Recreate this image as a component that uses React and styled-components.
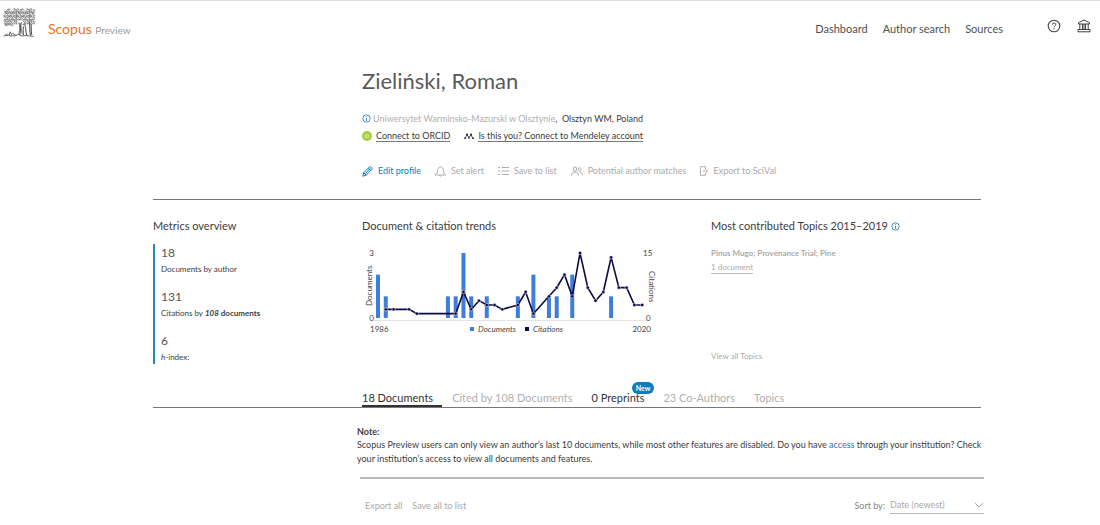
import React from 'react'
import styled, { createGlobalStyle } from 'styled-components'

const documents = {
  1986: 2,
  1987: 1,
  1995: 1,
  1996: 1,
  1997: 3,
  1998: 1,
  2000: 1,
  2004: 1,
  2006: 2,
  2008: 1,
  2009: 1,
  2011: 2,
  2016: 1,
}

const citations = {
  1987: 2,
  1988: 2,
  1990: 2,
  1991: 1,
  1996: 1,
  1997: 6,
  1998: 2,
  1999: 4,
  2000: 3,
  2001: 3,
  2002: 2,
  2004: 3,
  2005: 6,
  2006: 1,
  2008: 5,
  2009: 7,
  2010: 10,
  2011: 5,
  2012: 15,
  2013: 7,
  2014: 4,
  2015: 6,
  2016: 14,
  2017: 7,
  2018: 7,
  2019: 3,
  2020: 3,
}

const metrics = [
  { value: '18', label: 'Documents by author' },
  {
    value: '131',
    label: (
      <>
        Citations by{' '}
        <b>
          <i>108</i> documents
        </b>
      </>
    ),
  },
  {
    value: '6',
    label: (
      <>
        <i>h</i>-index:
      </>
    ),
  },
]

// crown of the tree: rows of small curls, shifted unevenly
const leaves = []
for (let row = 0; row < 9; row++) {
  for (let col = 0; col < 14; col++) {
    const n = (row * 7 + col * 5 + row * col) % 6
    if (row === 0 && (col < 1 || n === 3)) continue
    if (row > 5 && col > 5 && col < 9) continue
    if (row > 7 && col > 3) continue
    const x = 0.6 + col * 2.2 + (n % 3) * 0.4
    const y = 1.2 + row * 1.9 + (n % 2) * 0.7
    leaves.push(
      n < 3
        ? `M${x} ${y}q.8 -1.3 1.700 -.1t-.9 1`
        : `M${x} ${y + 0.8}q.2 -1.700 1.300 -1.100t.3 1.300`
    )
  }
}

const TreeLogo = () => (
  <svg width="33" height="30" viewBox="0 0 33 30" fill="none" stroke="#666">
    <path d={leaves.join('')} strokeWidth="0.8" />
    <path
      d="M15.500 14c1.500 3 1.800 7 .3 12M18.500 14c-1 4-.3 8 .7 12"
      strokeWidth="0.8"
    />
    <path
      d="M17 15c.6 4 .4 8-.2 12M20 17c1-2 2-1.500 2 .5 1.200 2 .4 6 1.600 9.500M20.500 18.500c-.8 3 0 6-.3 8.500M26 14c1.600 4 .2 8.500 1.400 13.500M28 16c.6 3-.2 7 .8 11"
      stroke="#444"
      strokeWidth="1"
    />
    <path
      d="M.5 28l5-.8 2 .8 4-.3 4-1.200 3 1.400 5-.4 7 .9M6 27.500l1.200-3.700 1.800 3.500M9.500 25l3.300 2.400M2.500 26.800l2-.7"
      stroke="#555"
      strokeWidth="0.9"
    />
  </svg>
)

const HelpIcon = () => (
  <svg width="14" height="14" viewBox="0 0 14 14" fill="none" stroke="#444">
    <circle cx="7" cy="7" r="5.800" strokeWidth="1.100" />
    <path d="M5.300 5.600c0-2.200 3.500-2.100 3.400 0 0 1.200-1.700 1.300-1.700 2.700M7 9.300v1.100" />
  </svg>
)

const InstitutionIcon = () => (
  <svg width="14" height="14" viewBox="0 0 14 14" fill="none" stroke="#444">
    <path d="M1.500 5V3.700L7 1l5.500 2.700V5zM2.800 5v5.500M5.500 5v5.500M7 5v5.500M8.500 5v5.500M11.200 5v5.500M1 12.800v-2.300h12v2.300z" />
  </svg>
)

const InfoIcon = () => (
  <svg width="9" height="9" viewBox="0 0 9 9" fill="none" stroke="#2b87bf">
    <circle cx="4.500" cy="4.500" r="3.700" strokeWidth="0.9" />
    <path d="M4.500 4v2.800M4.500 2.200v1" strokeWidth="0.9" />
  </svg>
)

const OrcidIcon = () => (
  <svg width="10" height="10" viewBox="0 0 10 10">
    <circle cx="5" cy="5" r="5" fill="#a6ce39" />
    <path
      d="M3.200 3.200v3.800M4.700 3.400v3.300h.9c2.200 0 2.200-3.300 0-3.300z"
      fill="none"
      stroke="#e3f1bd"
      strokeWidth="0.8"
    />
  </svg>
)

const MendeleyIcon = () => (
  <svg width="10" height="8" viewBox="0 0 10 8" fill="#333">
    <circle cx="3" cy="2.600" r="1.100" />
    <circle cx="7" cy="2.600" r="1.100" />
    <circle cx="1" cy="6.200" r="0.900" />
    <circle cx="5" cy="5.800" r="0.900" />
    <circle cx="9" cy="6.200" r="0.900" />
    <path
      d="M1.100 6.200C2.200 5.500 2 4 3 2.900L5 5.500l2-2.600c1 1.100.8 2.600 1.900 3.300"
      fill="none"
      stroke="#333"
      strokeWidth="0.9"
    />
  </svg>
)

const PencilIcon = () => (
  <svg width="11" height="11" viewBox="0 0 11 11" fill="none" stroke="#0c7dbb">
    <path d="M.8 10.200l.9-3.500L7.500.9c1-.8 3.200 1.200 2.400 2.400L4.200 9.200zM1.700 6.700l2.500 2.500M3 7.800l5.300-5.300M6.400 2l2.500 2.500" />
  </svg>
)

const BellIcon = () => (
  <svg width="11" height="11" viewBox="0 0 11 11" fill="none" stroke="#b0b0b0">
    <path d="M.3 9c1.800-1.200 2.200-2.300 2.200-4.300 0-2.400 1.200-3.700 3-3.700s3 1.300 3 3.700c0 2 .4 3.100 2.200 4.300zM4.400 9.200c.2 1.300 2 1.300 2.200 0" />
  </svg>
)

const ListIcon = () => (
  <svg width="11" height="10" viewBox="0 0 11 10" stroke="#b0b0b0">
    <path d="M0 1.500h2M0 5h2M0 8.500h2M3.500 1.500H11M3.500 5H11M3.500 8.500H11" />
  </svg>
)

const PeopleIcon = () => (
  <svg width="12" height="10" viewBox="0 0 12 10" fill="none" stroke="#aaa">
    <ellipse cx="4" cy="3" rx="1.700" ry="2.100" />
    <ellipse cx="8.700" cy="3.500" rx="1.400" ry="1.700" />
    <path d="M.6 9.500c0-2.500 1-3 2.600-3.600L4 6.700l.9-.8C6.500 6.500 7.400 7 7.400 9.500M8.700 6.400c1.600.2 2.700 1 2.700 3.100" />
  </svg>
)

const ExportIcon = () => (
  <svg width="8" height="10" viewBox="0 0 8 10" fill="none" stroke="#b0b0b0">
    <path d="M5.500 3V.7h-5v8.600h5V7M2.500 5h5M5.700 3.200L7.500 5 5.700 6.800" />
  </svg>
)

const TrendChart = () => {
  const x = year => 16 + (year - 1986) * 7.77
  const y = share => 74 - share * 65
  const points = Object.entries(citations).map(([year, n]) => [
    x(year),
    y(n / 15),
  ])
  return (
    <Chart viewBox="0 0 296 94" role="img" aria-label="Documents and citations">
      <path d="M10 76.500h276" stroke="#e4e4e4" />
      {Object.entries(documents).map(([year, n]) => (
        <rect
          key={year}
          x={x(year) - 2}
          y={y(n / 3)}
          width="4"
          height={(n * 65) / 3}
          fill="#3f7ddb"
        />
      ))}
      <polyline
        points={points.map(p => p.join()).join(' ')}
        fill="none"
        stroke="#0b0a45"
        strokeWidth="1.600"
      />
      {points.map(([px, py]) => (
        <circle
          key={px}
          cx={px}
          cy={py}
          r="1.700"
          fill="#0b0a45"
          stroke="#fff"
          strokeWidth="0.5"
        />
      ))}
      <text x="12" y="12" textAnchor="end">3</text>
      <text x="12" y="77" textAnchor="end">0</text>
      <text x="8" y="88">1986</text>
      <text x="281" y="12">15</text>
      <text x="284" y="77">0</text>
      <text x="289" y="88" textAnchor="end">2020</text>
      <text transform="translate(10 62) rotate(-90)">Documents</text>
      <text transform="translate(287 27) rotate(90)">Citations</text>
      <rect x="108" y="83" width="4" height="4" fill="#3f7ddb" />
      <text x="116" y="88" fontStyle="italic">Documents</text>
      <rect x="163" y="83" width="4" height="4" fill="#0b0a45" />
      <text x="171" y="88" fontStyle="italic">Citations</text>
    </Chart>
  )
}

const App = () => {
  return (
    <Page>
      <GlobalStyle />
      <Header>
        <TreeLogo />
        <Brand href="#">
          Scopus <span>Preview</span>
        </Brand>
        <Nav>
          <a href="#dashboard">Dashboard</a>
          <a href="#authors">Author search</a>
          <a href="#sources">Sources</a>
        </Nav>
        <HeaderIcons>
          <IconButton aria-label="Help">
            <HelpIcon />
          </IconButton>
          <IconButton aria-label="Institution">
            <InstitutionIcon />
          </IconButton>
        </HeaderIcons>
      </Header>

      <Main>
        <Profile>
          <Name>Zieliński, Roman</Name>
          <Line>
            <InfoIcon />
            <Affiliation>
              <span>Uniwersytet Warminsko-Mazurski w Olsztynie</span>,&nbsp;
              Olsztyn WM, Poland
            </Affiliation>
          </Line>
          <Line>
            <OrcidIcon />
            <Connect href="#orcid">Connect to ORCID</Connect>
            <MendeleyIcon />
            <Connect href="#mendeley">
              Is this you? Connect to Mendeley account
            </Connect>
          </Line>
          <Actions>
            <Action $active>
              <PencilIcon />
              Edit profile
            </Action>
            <Action>
              <BellIcon />
              Set alert
            </Action>
            <Action>
              <ListIcon />
              Save to list
            </Action>
            <Action>
              <PeopleIcon />
              Potential author matches
            </Action>
            <Action>
              <ExportIcon />
              Export to SciVal
            </Action>
          </Actions>
        </Profile>

        <Overview>
          <section>
            <Heading>Metrics overview</Heading>
            <Metrics>
              {metrics.map(({ value, label }) => (
                <li key={value}>
                  <Value>{value}</Value>
                  <Label>{label}</Label>
                </li>
              ))}
            </Metrics>
          </section>
          <section>
            <Heading>Document &amp; citation trends</Heading>
            <TrendChart />
          </section>
          <Topics>
            <Heading>
              Most contributed Topics 2015–2019 <InfoIcon />
            </Heading>
            <Topic>Pinus Mugo; Provenance Trial; Pine</Topic>
            <TopicLink href="#topic">1 document</TopicLink>
            <AllTopics href="#topics">View all Topics</AllTopics>
          </Topics>
        </Overview>

        <Tabs>
          <Tab $active>18 Documents</Tab>
          <Tab>Cited by 108 Documents</Tab>
          <Tab $dark>
            0 Preprints
            <Badge>New</Badge>
          </Tab>
          <Tab>23 Co-Authors</Tab>
          <Tab>Topics</Tab>
        </Tabs>
      </Main>

      <Results>
        <Note>
          <b>Note:</b>
          <p>
            Scopus Preview users can only view an author’s last 10 documents,
            while most other features are disabled. Do you have{' '}
            <a href="#access">access</a> through your institution? Check your
            institution’s access to view all documents and features.
          </p>
        </Note>
        <Toolbar>
          <Action>Export all</Action>
          <Action>Save all to list</Action>
          <Sort>
            <label htmlFor="sort">Sort by:</label>
            <SelectWrap>
              <select id="sort">
                <option>Date (newest)</option>
              </select>
              <svg width="10" height="6" viewBox="0 0 10 6" fill="none">
                <path d="M1 1l4 4 4-4" stroke="#aaa" />
              </svg>
            </SelectWrap>
          </Sort>
        </Toolbar>
      </Results>
    </Page>
  )
}

const GlobalStyle = createGlobalStyle`
  * {
    box-sizing: border-box;
  }
  body {
    margin: 0;
    background: #fff;
    color: #3c3c3c;
    font-family: Lato, 'Open Sans', sans-serif;
    font-size: 9px;
  }
  a {
    color: inherit;
    text-decoration: none;
  }
  button,
  select {
    font: inherit;
    color: inherit;
    background: none;
    border: none;
    padding: 0;
    cursor: pointer;
  }
  svg {
    flex-shrink: 0;
  }
`
const Page = styled.div`
  border-top: 1px solid #dcdcdc;
`
const Header = styled.header`
  display: flex;
  align-items: center;
  height: 54px;
  padding: 0 9px 0 3px;
  & > svg {
    margin-bottom: 10px;
  }
`
const Brand = styled.a`
  margin-left: 12px;
  font-size: 14px;
  color: #e9711c;
  & span {
    font-size: 10px;
    color: #999;
  }
`
const Nav = styled.nav`
  display: flex;
  gap: 15px;
  margin-left: auto;
  font-size: 11px;
  color: #505050;
`
const HeaderIcons = styled.div`
  display: flex;
  gap: 16px;
  margin: 0 0 4px 44px;
`
const IconButton = styled.button`
  display: flex;
`
const Main = styled.main`
  padding: 0 119px 0 153px;
`
const Profile = styled.section`
  padding: 12px 0 20px 209px;
  border-bottom: 1px solid #777;
`
const Name = styled.h1`
  margin: 0 0 15px;
  font-size: 22px;
  line-height: 28px;
  font-weight: normal;
  color: #5a5a5a;
`
const Line = styled.div`
  display: flex;
  align-items: center;
  min-height: 17px;
`
const Affiliation = styled.div`
  margin-left: 2px;
  & span {
    color: #b0b0b0;
  }
`
const Connect = styled.a`
  margin: 0 14px 0 4px;
  line-height: 11px;
  border-bottom: 1px solid #777;
`
const Actions = styled.div`
  display: flex;
  gap: 14px;
  margin-top: 19px;
`
const Action = styled.button`
  display: flex;
  align-items: center;
  gap: 5px;
  line-height: 16px;
  color: ${({ $active }) => ($active ? '#0c7dbb' : '#aaa')};
`
const Overview = styled.div`
  display: grid;
  grid-template-columns: 209px 349px 1fr;
  padding-top: 18px;
`
const Heading = styled.h2`
  margin: 0 0 10px;
  font-size: 11px;
  line-height: 16px;
  font-weight: normal;
  & svg {
    vertical-align: -1px;
  }
`
const Metrics = styled.ul`
  display: flex;
  flex-direction: column;
  gap: 12px;
  margin: 0;
  padding: 0 0 0 6px;
  list-style: none;
  border-left: 2px solid #2b87b0;
`
const Value = styled.div`
  font-size: 12px;
  line-height: 18px;
  color: #555;
`
const Label = styled.div`
  font-size: 8px;
  line-height: 14px;
`
const Chart = styled.svg`
  display: block;
  width: 296px;
  font-size: 8px;
  fill: #444;
`
const Topics = styled.section`
  display: flex;
  flex-direction: column;
  align-items: flex-start;
  padding-bottom: 2px;
  font-size: 8px;
  line-height: 12px;
  color: #aaa;
  & h2 {
    color: #3c3c3c;
  }
`
const Topic = styled.div`
  margin: 3px 0 2px;
  font-weight: bold;
`
const TopicLink = styled.a`
  border-bottom: 1px solid #bbb;
`
const AllTopics = styled.a`
  margin-top: auto;
`
const Tabs = styled.div`
  display: flex;
  gap: 10px;
  margin-top: 26px;
  padding-left: 209px;
  border-bottom: 1px solid #777;
`
const Tab = styled.button`
  position: relative;
  padding-right: 9px;
  font-size: 11px;
  line-height: 15px;
  color: ${({ $active, $dark }) => ($active || $dark ? '#333' : '#b0b0b0')};
  border-bottom: 2px solid ${({ $active }) => ($active ? '#333' : 'transparent')};
`
const Badge = styled.span`
  position: absolute;
  top: -8px;
  right: -1px;
  padding: 0 4px;
  font-size: 7px;
  line-height: 12px;
  font-weight: bold;
  color: #fff;
  background: #0c7dbb;
  border-radius: 6px;
`
const Results = styled.section`
  padding: 17px 116px 0 357px;
`
const Note = styled.div`
  line-height: 14px;
  & b {
    display: block;
    line-height: 13px;
  }
  & p {
    margin: 0;
  }
  & a {
    color: #0c7dbb;
  }
`
const Toolbar = styled.div`
  display: flex;
  align-items: center;
  gap: 10px;
  margin: 11px 0 0 3px;
  padding: 18px 0 0 5px;
  border-top: 2px solid #bbb;
`
const Sort = styled.div`
  display: flex;
  align-items: center;
  gap: 5px;
  margin-left: auto;
  color: #888;
`
const SelectWrap = styled.div`
  display: flex;
  align-items: center;
  width: 94px;
  border-bottom: 1px solid #bbb;
  & select {
    flex: 1;
    appearance: none;
    line-height: 16px;
    color: #aaa;
  }
`
export default App
